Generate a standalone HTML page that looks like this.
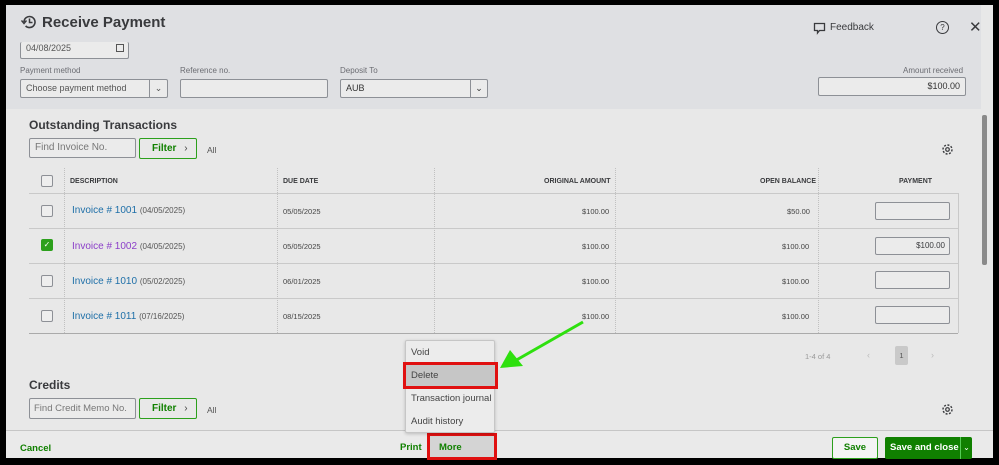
<!DOCTYPE html>
<html><head><style>
*{box-sizing:border-box;margin:0;padding:0}
body{width:999px;height:465px;background:#000;font-family:"Liberation Sans",sans-serif;position:relative;overflow:hidden;color:#393a3d}
.a{position:absolute;white-space:nowrap}
.inp{position:absolute;white-space:nowrap;overflow:hidden;border:1px solid #8d9096;border-radius:2px;background:#ebebeb;font-size:9px;color:#555;padding:0 5px;line-height:16px}
.lbl{position:absolute;font-size:8px;color:#6b6c72}
.th{position:absolute;font-size:7px;font-weight:bold;color:#393a3d;top:178px}
.cb{position:absolute;left:41px;width:12px;height:12px;border:1px solid #8d9096;border-radius:2px;background:#eee}
.inv{position:absolute;white-space:nowrap;left:72px;font-size:10px;color:#1e6fa8}
.inv small{font-size:8px;color:#555}
.cell{position:absolute;font-size:7.5px;color:#444}
.pay{position:absolute;left:875px;width:75px;height:18px;border:1px solid #8d9096;border-radius:2px;background:#ebebeb;font-size:8px;text-align:right;padding:3px 4px}
.hl{position:absolute;left:29px;width:929px;height:1px;background:#c9c9c9}
.vl{position:absolute;width:0;border-left:1px dotted #c0c0c0;top:168px;height:165px}
.menu div{height:23px;line-height:23px;padding-left:5px;font-size:9.5px;color:#444}
</style></head><body>
<div class="a" style="left:6px;top:5px;width:987px;height:453px;background:#e8e8e8"></div>
<div class="a" style="left:6px;top:5px;width:975px;height:104px;background:#dfe0e3"></div>
<svg class="a" style="left:21px;top:14px" width="16" height="16" viewBox="0 0 16 16"><path d="M3 8a5.5 5.5 0 1 1 1.6 3.9" fill="none" stroke="#393a3d" stroke-width="1.6"/><path d="M0.5 6.5 3 9.5 5.5 6.5" fill="none" stroke="#393a3d" stroke-width="1.4"/><path d="M8.5 4.5v4h3" fill="none" stroke="#393a3d" stroke-width="1.5"/></svg>
<div class="a" style="left:42px;top:14px;font-size:15px;font-weight:bold;color:#393a3d">Receive Payment</div>
<svg class="a" style="left:813px;top:22px" width="13" height="13" viewBox="0 0 13 13"><path d="M1.5 1.5h10v7h-5l-2 2.5v-2.5h-3z" fill="none" stroke="#393a3d" stroke-width="1.3"/></svg>
<div class="a" style="left:830px;top:22px;font-size:10px;color:#393a3d">Feedback</div>
<div class="a" style="left:936px;top:21px;width:13px;height:13px;border:1.3px solid #393a3d;border-radius:50%;font-size:8px;text-align:center;line-height:11px">?</div>
<div class="a" style="left:969px;top:18px;font-size:15px;color:#393a3d">✕</div>
<div class="inp" style="left:20px;top:42px;width:109px;height:17px;border-top:none;line-height:12px">04/08/2025<span style="position:absolute;right:4px;top:2px;width:8px;height:8px;border:1px solid #555"></span></div>
<div class="lbl" style="left:20px;top:66px">Payment method</div>
<div class="inp" style="left:20px;top:79px;width:148px;height:19px">Choose payment method<span style="position:absolute;right:0;top:0;width:18px;height:17px;border-left:1px solid #8d9096;text-align:center;font-size:9px">⌄</span></div>
<div class="lbl" style="left:180px;top:66px">Reference no.</div>
<div class="inp" style="left:180px;top:79px;width:148px;height:19px"></div>
<div class="lbl" style="left:340px;top:66px">Deposit To</div>
<div class="inp" style="left:340px;top:79px;width:148px;height:19px;color:#333">AUB<span style="position:absolute;right:0;top:0;width:17px;height:17px;border-left:1px solid #8d9096;text-align:center;font-size:9px">⌄</span></div>
<div class="lbl" style="left:903px;top:66px">Amount received</div>
<div class="inp" style="left:818px;top:77px;width:148px;height:19px;text-align:right;color:#333">$100.00</div>
<div class="a" style="left:982px;top:115px;width:5px;height:150px;background:#8a8a8a;border-radius:2px"></div>
<div class="a" style="left:29px;top:118px;font-size:12px;font-weight:bold;color:#393a3d">Outstanding Transactions</div>
<div class="inp" style="left:29px;top:138px;width:107px;height:20px;line-height:18px;font-size:10px;color:#777">Find Invoice No.</div>
<div class="a" style="left:139px;top:138px;width:58px;height:21px;border:1px solid #2ca01c;border-radius:2px;font-size:10px;font-weight:bold;color:#108000;line-height:19px;padding-left:12px">Filter <span style="font-weight:normal;color:#444;margin-left:5px">›</span></div>
<div class="a" style="left:207px;top:145px;font-size:8.5px;color:#555">All</div>
<svg class="a" style="left:941px;top:143px" width="13" height="13" viewBox="0 0 13 13"><circle cx="6.5" cy="6.5" r="4.5" fill="none" stroke="#393a3d" stroke-width="1.4" stroke-dasharray="2 1.5"/><circle cx="6.5" cy="6.5" r="1.8" fill="none" stroke="#393a3d" stroke-width="1.2"/></svg>
<div class="hl" style="top:193px"></div><div class="hl" style="top:228px"></div><div class="hl" style="top:263px"></div><div class="hl" style="top:298px"></div><div class="hl" style="top:333px;background:#aaa"></div>
<div class="a" style="left:958px;top:193px;width:1px;height:140px;background:#c9c9c9"></div>
<div class="vl" style="left:64px"></div><div class="vl" style="left:277px"></div><div class="vl" style="left:434px"></div><div class="vl" style="left:615px"></div><div class="vl" style="left:818px"></div>
<div class="cb" style="top:175px"></div>
<div class="th" style="left:70px">DESCRIPTION</div><div class="th" style="left:283px">DUE DATE</div>
<div class="th" style="left:544px">ORIGINAL AMOUNT</div><div class="th" style="left:760px">OPEN BALANCE</div><div class="th" style="left:899px">PAYMENT</div>

<div class="cb" style="top:205px"></div>
<div class="inv" style="top:205px">Invoice # 1001 <small>(04/05/2025)</small></div>
<div class="cell" style="left:283px;top:207px">05/05/2025</div><div class="cell" style="left:582px;top:207px">$100.00</div><div class="cell" style="left:787px;top:207px">$50.00</div><div class="pay" style="top:202px"></div>

<div class="cb" style="top:239px;background:#2ca01c;border-color:#2ca01c;color:#fff;font-size:8px;text-align:center;line-height:10px">✓</div>
<div class="inv" style="top:241px;color:#8b3fc9">Invoice # 1002 <small>(04/05/2025)</small></div>
<div class="cell" style="left:283px;top:242px">05/05/2025</div><div class="cell" style="left:582px;top:242px">$100.00</div><div class="cell" style="left:782px;top:242px">$100.00</div><div class="pay" style="top:237px">$100.00</div>

<div class="cb" style="top:275px"></div>
<div class="inv" style="top:276px">Invoice # 1010 <small>(05/02/2025)</small></div>
<div class="cell" style="left:283px;top:277px">06/01/2025</div><div class="cell" style="left:582px;top:277px">$100.00</div><div class="cell" style="left:782px;top:277px">$100.00</div><div class="pay" style="top:271px"></div>

<div class="cb" style="top:310px"></div>
<div class="inv" style="top:311px">Invoice # 1011 <small>(07/16/2025)</small></div>
<div class="cell" style="left:283px;top:312px">08/15/2025</div><div class="cell" style="left:582px;top:312px">$100.00</div><div class="cell" style="left:782px;top:312px">$100.00</div><div class="pay" style="top:306px"></div>

<div class="a" style="left:805px;top:352px;font-size:7.5px;color:#999">1-4 of 4</div>
<div class="a" style="left:867px;top:350px;font-size:9px;color:#bbb">‹</div>
<div class="a" style="left:895px;top:346px;width:13px;height:19px;background:#c9c9c9;border-radius:2px;font-size:7.5px;text-align:center;line-height:19px;color:#555">1</div>
<div class="a" style="left:931px;top:350px;font-size:9px;color:#bbb">›</div>
<div class="a" style="left:29px;top:378px;font-size:12px;font-weight:bold;color:#393a3d">Credits</div>
<div class="inp" style="left:29px;top:398px;width:107px;height:21px;line-height:19px;font-size:9.5px;color:#777;padding:0 4px">Find Credit Memo No.</div>
<div class="a" style="left:139px;top:398px;width:58px;height:21px;border:1px solid #2ca01c;border-radius:2px;font-size:10px;font-weight:bold;color:#108000;line-height:19px;padding-left:12px">Filter <span style="font-weight:normal;color:#444;margin-left:5px">›</span></div>
<div class="a" style="left:207px;top:405px;font-size:8.5px;color:#555">All</div>
<svg class="a" style="left:941px;top:403px" width="13" height="13" viewBox="0 0 13 13"><circle cx="6.5" cy="6.5" r="4.5" fill="none" stroke="#393a3d" stroke-width="1.4" stroke-dasharray="2 1.5"/><circle cx="6.5" cy="6.5" r="1.8" fill="none" stroke="#393a3d" stroke-width="1.2"/></svg>
<div class="a" style="left:6px;top:430px;width:987px;height:28px;background:#eaeaea;border-top:1px solid #c6c6c6"></div>
<div class="a" style="left:20px;top:443px;font-size:9.5px;font-weight:bold;color:#108000">Cancel</div>
<div class="a" style="left:400px;top:442px;font-size:9.5px;font-weight:bold;color:#108000">Print</div>
<div class="a" style="left:427px;top:433px;width:70px;height:27px;border:3px solid #e01010;background:#d4d4d4;font-size:9.5px;font-weight:bold;color:#108000;padding:6px 0 0 9px">More</div>
<div class="a" style="left:832px;top:437px;width:46px;height:22px;border:1px solid #2ca01c;border-radius:2px;background:#f4f4f4;font-size:9.5px;font-weight:bold;color:#108000;text-align:center;line-height:20px">Save</div>
<div class="a" style="left:885px;top:437px;width:87px;height:22px;background:#108000;border-radius:2px;font-size:9.5px;font-weight:bold;color:#fff;line-height:22px;padding-left:5px">Save and close<span style="position:absolute;right:0;top:0;width:12px;height:22px;border-left:1px solid #5c5;text-align:center;font-weight:normal;font-size:8px">⌄</span></div>
<div class="a menu" style="left:405px;top:340px;width:90px;height:93px;background:#ececec;border:1px solid #c6c6c6;border-radius:2px;box-shadow:0 1px 3px rgba(0,0,0,.2)">
<div>Void</div><div style="background:#c6c6c6">Delete</div><div>Transaction journal</div><div>Audit history</div></div>
<div class="a" style="left:403px;top:362px;width:95px;height:27px;border:3px solid #e01010"></div>
<svg class="a" style="left:495px;top:320px" width="90" height="55" viewBox="0 0 90 55"><line x1="88" y1="2" x2="18" y2="42" stroke="#2ee00e" stroke-width="3"/><polygon points="5,48 15,30 28,46" fill="#2ee00e"/></svg>
</body></html>
